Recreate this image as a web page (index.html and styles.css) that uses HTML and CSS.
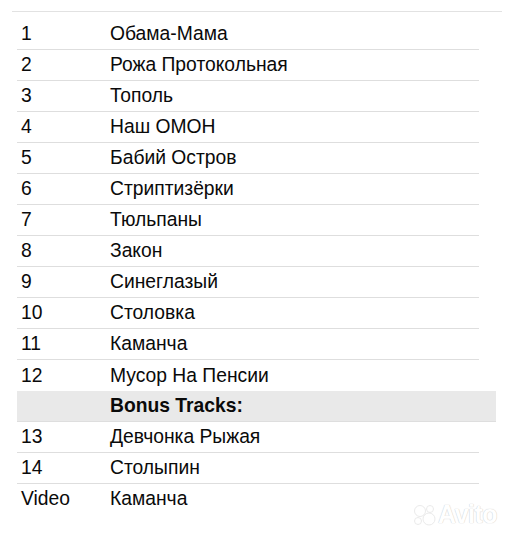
FILE: index.html
```html
<!DOCTYPE html>
<html>
<head>
<meta charset="utf-8">
<link rel="stylesheet" href="styles.css">
</head>
<body>
<div class="page">
  <div class="topline"></div>
  <div class="list">
    <div class="row"><span class="num">1</span><span class="title">Обама-Мама</span></div>
    <div class="row"><span class="num">2</span><span class="title">Рожа Протокольная</span></div>
    <div class="row"><span class="num">3</span><span class="title">Тополь</span></div>
    <div class="row"><span class="num">4</span><span class="title">Наш ОМОН</span></div>
    <div class="row"><span class="num">5</span><span class="title">Бабий Остров</span></div>
    <div class="row"><span class="num">6</span><span class="title">Стриптизёрки</span></div>
    <div class="row"><span class="num">7</span><span class="title">Тюльпаны</span></div>
    <div class="row"><span class="num">8</span><span class="title">Закон</span></div>
    <div class="row"><span class="num">9</span><span class="title">Синеглазый</span></div>
    <div class="row"><span class="num">10</span><span class="title">Столовка</span></div>
    <div class="row"><span class="num">11</span><span class="title">Каманча</span></div>
    <div class="row last-before"><span class="num">12</span><span class="title">Мусор На Пенсии</span></div>
    <div class="row bonus"><span class="num"></span><span class="title">Bonus Tracks:</span></div>
    <div class="row"><span class="num">13</span><span class="title">Девчонка Рыжая</span></div>
    <div class="row"><span class="num">14</span><span class="title">Столыпин</span></div>
    <div class="row final"><span class="num">Video</span><span class="title">Каманча</span></div>
  </div>
  <div class="watermark">
    <svg class="wm-logo" width="24" height="22" viewBox="0 0 24 22">
      <circle cx="7" cy="7" r="5.5"/>
      <circle cx="17" cy="5" r="3.5"/>
      <circle cx="5" cy="17" r="3.5"/>
      <circle cx="16" cy="15" r="6"/>
    </svg>
    <span class="wm-text">Avito</span>
  </div>
</div>
</body>
</html>
```
FILE: styles.css
```css
html, body {
  margin: 0;
  padding: 0;
  background: #fff;
}
.page {
  position: relative;
  width: 513px;
  height: 540px;
  overflow: hidden;
  font-family: "Liberation Sans", Arial, sans-serif;
  color: #0a0a0a;
}
.topline {
  margin: 11px 0 0 12px;
  width: 490px;
  height: 1px;
  background: #e2e2e2;
}
.list {
  margin: 7px 0 0 17px;
  width: 479px;
  display: flex;
  flex-direction: column;
}
.row {
  display: flex;
  align-items: center;
  height: 30px;
  width: 462px;
  border-bottom: 1px solid #dedede;
  font-size: 19.3px;
}
.row.last-before {
  border-bottom: none;
  height: 31px;
}
.row.bonus {
  width: 479px;
  background: #e9e9e9;
  font-weight: bold;
}
.row.final {
  border-bottom: none;
}
.num {
  width: 89px;
  padding-left: 4px;
  flex: none;
}
.title {
  white-space: nowrap;
}
.watermark {
  position: absolute;
  left: 413px;
  top: 500px;
  display: flex;
  align-items: center;
  gap: 1px;
}
.wm-logo circle {
  fill: #fff;
  stroke: #e4e4e4;
  stroke-width: 0.8;
}
.wm-text {
  font-family: "Liberation Sans", Arial, sans-serif;
  font-size: 25px;
  font-weight: bold;
  color: #fff;
  text-shadow: 0 0 1px #d0d0d0, 0 0 1px #d0d0d0;
  letter-spacing: -0.5px;
}
```
